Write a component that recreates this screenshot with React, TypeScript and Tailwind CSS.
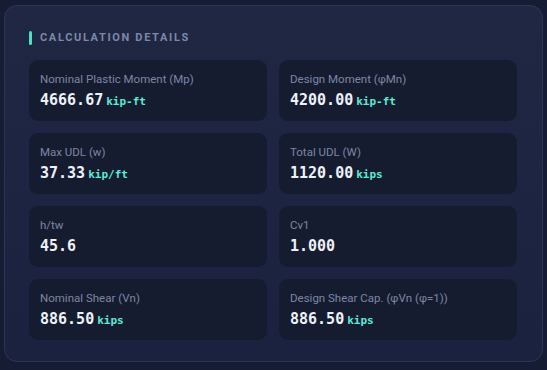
import React from "react";

const items: { label: string; value: string; unit?: string }[] = [
  { label: "Nominal Plastic Moment (Mp)", value: "4666.67", unit: "kip-ft" },
  { label: "Design Moment (φMn)", value: "4200.00", unit: "kip-ft" },
  { label: "Max UDL (w)", value: "37.33", unit: "kip/ft" },
  { label: "Total UDL (W)", value: "1120.00", unit: "kips" },
  { label: "h/tw", value: "45.6" },
  { label: "Cv1", value: "1.000" },
  { label: "Nominal Shear (Vn)", value: "886.50", unit: "kips" },
  { label: "Design Shear Cap. (φVn (φ=1))", value: "886.50", unit: "kips" },
];

export default function App() {
  return (
    <div className="w-[547px] h-[370px] bg-[#151c34] pt-[5px] pl-[4px]" style={{ fontFamily: "Roboto, 'Noto Sans', sans-serif" }}>
      <div className="w-[539px] h-[357px] rounded-[13px] border border-[#2c3654] bg-gradient-to-b from-[#1f2743] to-[#1b2240] pt-[24px] pl-[24px] pr-[25px]">
        <div className="flex items-center gap-[8px] h-[16px]">
          <div className="w-[3px] h-[14px] rounded-sm bg-[#4fe0c0]" />
          <div className="text-[11px] font-bold tracking-[0.15em] text-[#7d88a8]">CALCULATION DETAILS</div>
        </div>
        <div className="grid grid-cols-2 gap-x-[12px] gap-y-[12px] mt-[14px]">
          {items.map((it) => (
            <div key={it.label} className="h-[61px] rounded-[9px] bg-[#161c30] pl-[11px] pt-[11px]">
              <div className="text-[11.5px] leading-[16px] text-[#7c86a3]">{it.label}</div>
              <div className="flex items-baseline mt-[3px]" style={{ fontFamily: "'DejaVu Sans Mono', 'Liberation Mono', monospace" }}>
                <span className="text-[15px] font-bold text-[#eef1f8] leading-[20px]">{it.value}</span>
                {it.unit && <span className="ml-[3px] text-[11px] font-bold text-[#5eead4]">{it.unit}</span>}
              </div>
            </div>
          ))}
        </div>
      </div>
    </div>
  );
}
